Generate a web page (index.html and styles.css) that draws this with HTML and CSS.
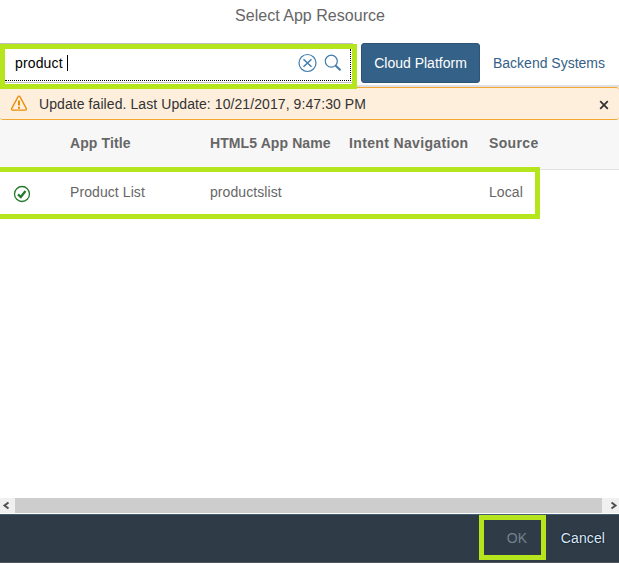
FILE: index.html
```html
<!DOCTYPE html>
<html lang="en">
<head>
<meta charset="utf-8">
<title>Select App Resource</title>
<link rel="stylesheet" href="styles.css">
</head>
<body>
<div class="dialog">
  <header class="title"><span>Select App Resource</span></header>
  <div class="toolbar">
    <div class="search">
      <span class="query">product</span><span class="caret"></span>
      <svg class="clear" width="20" height="20" viewBox="0 0 20 20"><circle cx="9.500" cy="10" r="8.500"/><path class="cross" d="M5.500 6.200 13.500 13.800M13.500 6.200 5.500 13.800"/></svg>
      <svg class="lens" width="18" height="18" viewBox="0 0 18 18"><circle cx="7.300" cy="7.200" r="6"/><path class="handle" d="m11.500 11.500 5 4.800"/></svg>
    </div>
    <button class="tab active">Cloud Platform</button>
    <button class="tab">Backend Systems</button>
    <div class="mark mark-search"></div>
  </div>
  <div class="strip">
    <svg class="warn" width="18" height="17" viewBox="0 0 18 17"><path d="M9 1.200c.6 0 .9.3 1.200.9l6 11.300c.6 1.100.1 1.800-1 1.800H2.800c-1.100 0-1.600-.7-1-1.800L7.800 2.100C8.100 1.500 8.400 1.200 9 1.200Z"/><path class="bang" d="M9 5.500v5M9 11.800v2"/></svg>
    <span class="message">Update failed. Last Update: 10/21/2017, 9:47:30 PM</span>
    <svg class="close" width="10" height="10" viewBox="0 0 10 10"><path d="m1.200 1.200 7.600 7.600M8.800 1.200 1.200 8.800"/></svg>
  </div>
  <div class="row head">
    <span></span><span class="app">App Title</span><span class="name">HTML5 App Name</span><span class="intent">Intent Navigation</span><span class="source">Source</span>
  </div>
  <div class="row item">
    <svg class="check" width="18" height="18" viewBox="0 0 18 18"><circle cx="9" cy="9" r="7.500"/><path d="m5 9.300 2.800 2.700 4.700-6"/></svg>
    <span>Product List</span><span>productslist</span><span></span><span>Local</span>
    <div class="mark mark-row"></div>
  </div>
  <div class="space"></div>
  <div class="scrollbar">
    <svg width="15" height="15" viewBox="0 0 15 15"><path d="M8.500 4.500 4.500 7.500l4 3"/></svg>
    <div class="thumb"></div>
    <svg width="17" height="15" viewBox="0 0 17 15"><path d="m9.500 4.500 4 3-4 3"/></svg>
  </div>
  <footer class="footer">
    <div class="ok"><span>OK</span></div>
    <span class="cancel">Cancel</span>
  </footer>
</div>
</body>
</html>
```
FILE: styles.css
```css
* { box-sizing: border-box; }
body { margin: 0; font: 14px/18px "Liberation Sans", Arial, sans-serif; color: #666; background: #fff; }
.dialog { width: 619px; height: 563px; display: flex; flex-direction: column; overflow: hidden; }
svg { display: block; fill: none; flex: none; }
.title { height: 43px; padding-top: 7px; padding-left: 1px; text-align: center; font-size: 16px; letter-spacing: .03px; }
.toolbar { position: relative; height: 44px; display: flex; align-items: flex-start; border-bottom: 2px solid #dfe0e3; }
.search { position: relative; width: 353px; height: 40px; margin-right: 8px; padding-left: 15px; display: flex; align-items: center; border: solid #bfbfbf; border-width: 1px 0; color: #000; }
.search::after { content: ""; position: absolute; left: 5px; right: 2px; top: 5px; bottom: 1px; border: dotted #000; border-width: 0 1px 1px 0; }
.query { letter-spacing: .15px; }
.caret { width: 1px; height: 16px; margin-left: 4px; background: #000; }
.clear, .lens { stroke: #427cac; stroke-width: 1.2; }
.clear { margin-left: auto; margin-right: 6px; }
.cross { stroke-width: 1.5; }
.lens { margin-right: 11px; }
.handle { stroke-width: 2; }
.tab { width: 119px; height: 40px; padding: 0; border: 1px solid transparent; border-radius: 3px; background: none; color: #346187; font: inherit; text-align: center; }
.tab.active { background: #346187; border-color: #2b5475; color: #fff; }
.tab + .tab { width: 138px; }
.mark { position: absolute; z-index: 2; border: 5px solid #b5e61d; pointer-events: none; }
.mark-search { left: 0; top: 1px; width: 357px; height: 45px; }
.strip { height: 33px; display: flex; align-items: center; padding: 0 10px; border: 1px solid #f5a733; border-left-color: #feeedc; border-width: 1px 0; border-radius: 3px; background: #feeedc; color: #333; }
.warn { stroke: #e78c07; stroke-width: 1.3; }
.bang { stroke-width: 2; }
.message { margin-left: 11px; padding-top: 1px; letter-spacing: .08px; }
.close { margin-left: auto; margin-top: 2px; stroke: #333; stroke-width: 1.8; }
.row { position: relative; display: grid; grid-template-columns: 70px 140px 139px 140px 1fr; }
.row span { white-space: nowrap; }
.head { height: 50px; padding-top: 14px; background: #f7f7f7; border-bottom: 1px solid #e0e0e0; font-weight: bold; }
.app, .name { letter-spacing: .1px; }
.intent, .source { letter-spacing: .35px; }
.item { height: 49px; padding-top: 13px; letter-spacing: .08px; }
.check { margin: 2px 0 0 13px; stroke: #23792c; stroke-width: 1.3; }
.check path { stroke-width: 2.3; }
.mark-row { left: -5px; top: -3px; width: 545px; height: 52px; }
.space { flex: 1; }
.scrollbar { height: 16px; display: flex; background: #f0f0f0; border-bottom: 1px solid #fff; }
.scrollbar svg { stroke: #505050; stroke-width: 2; }
.thumb { flex: 1; background: #cdcdcd; }
.footer { height: 49px; display: flex; justify-content: flex-end; align-items: flex-start; padding: 1px 14px 0 0; background: #2f3c48; border-top: 1px solid #425e73; border-bottom: 1px solid #50555a; }
.ok { width: 67px; height: 45px; margin: -1px 15px 0 0; padding: 9px 0 0 23px; border: 5px solid #b5e61d; color: #74818f; }
.cancel { padding-top: 13px; color: #d6eaff; letter-spacing: .1px; text-shadow: 0 0 2px #000; }
```
